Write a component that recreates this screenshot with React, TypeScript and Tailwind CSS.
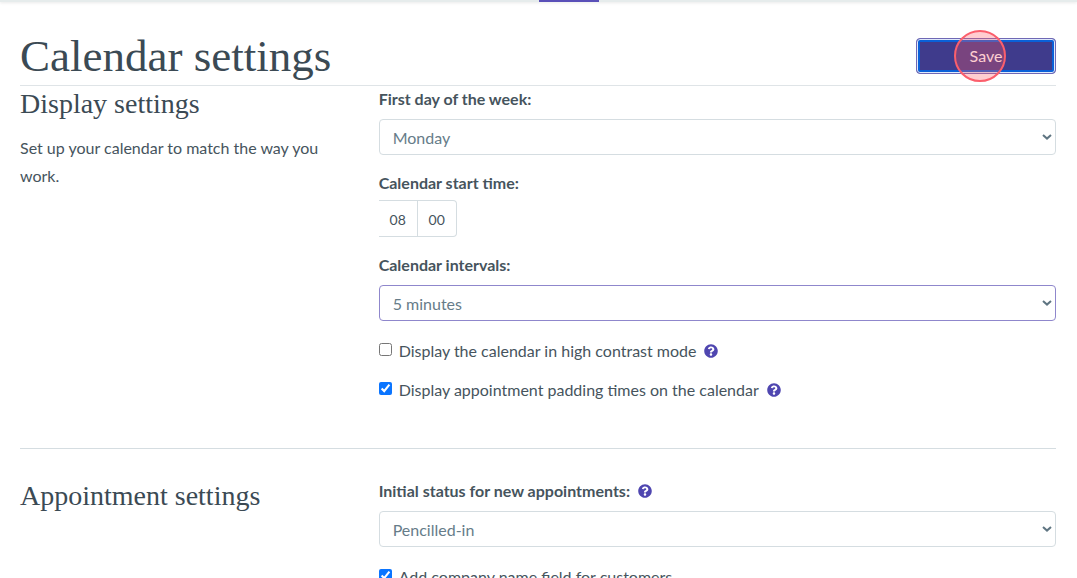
import { useState } from "react";
import type { ReactNode } from "react";
import { FaQuestionCircle } from "react-icons/fa";

function Help({ label }: { label: string }) {
  return (
    <button type="button" aria-label={label} className="ml-2 inline-flex text-[#4f46b0]">
      <FaQuestionCircle size={14} />
    </button>
  );
}

function Chevron() {
  return (
    <svg viewBox="0 0 10 6" className="pointer-events-none absolute right-1 top-[15px] h-[6px] w-[10px]"
      fill="none" stroke="#5f7582" strokeWidth="2">
      <path d="M1 1l4 3.6L9 1" />
    </svg>
  );
}

type SelectFieldProps = {
  id: string;
  label: string;
  options: string[];
  help?: string;
  focused?: boolean;
};

function SelectField({ id, label, options, help, focused }: SelectFieldProps) {
  return (
    <div>
      <div className="flex h-[26px] items-center">
        <label htmlFor={id} className="font-bold">{label}</label>
        {help && <Help label={help} />}
      </div>
      <div className="relative mt-[7px]">
        <select id={id}
          className={`block h-9 w-full appearance-none rounded border bg-white px-[13px] pt-[2px] text-[#667c89] outline-none ${focused ? "border-[#8f87cc]" : "border-[#d5dde1]"}`}>
          {options.map((o) => <option key={o}>{o}</option>)}
        </select>
        <Chevron />
      </div>
    </div>
  );
}

function CheckField({ id, label, help, checked }: { id: string; label: string; help?: string; checked?: boolean }) {
  return (
    <div className="flex h-7 items-center">
      <input id={id} type="checkbox" defaultChecked={checked} className="mb-1 mr-[7px] size-[13px] accent-[#0b75ff]" />
      <label htmlFor={id}>{label}</label>
      {help && <Help label={help} />}
    </div>
  );
}

function Section({ title, desc, children }: { title: string; desc?: string; children: ReactNode }) {
  return (
    <section className="grid grid-cols-3 gap-10">
      <div>
        <h2 className="font-['Liberation_Serif',serif] text-[28px] leading-9 text-[#3b4a54]">{title}</h2>
        {desc && <p className="mt-3 leading-7">{desc}</p>}
      </div>
      <div className="col-span-2">{children}</div>
    </section>
  );
}

export default function App() {
  const [hour, setHour] = useState("08");
  const [minute, setMinute] = useState("00");

  return (
    <div className="flex h-screen flex-col bg-white font-['Lato',sans-serif] text-base text-[#46545d]">
      {/* Bottom edge of the nav, with the active tab marker */}
      <nav className="h-[2px] shrink-0 bg-[#e6ecec] shadow-sm">
        <div className="ml-[50%] h-[2px] w-15 bg-[#5a50b8]" />
      </nav>

      <main className="flex-1 overflow-y-auto pl-5 pr-[21px] [scrollbar-width:none]">
        <header className="flex h-[84px] items-center justify-between border-b border-[#dfe4e7] pt-6">
          <h1 className="font-['Liberation_Serif',serif] text-[45px] leading-[52px] text-[#3b4a54]">Calendar settings</h1>
          <div className="relative">
            <button type="button"
              className="h-9 w-[140px] rounded border border-[#6f68b5] bg-[#3f3b8c] text-white shadow-[inset_0_0_0_1px_#dfe9fb,inset_0_0_0_3px_#0a60d8]">
              Save
            </button>
            {/* Click marker */}
            <span className="pointer-events-none absolute left-[38px] -top-2 size-[52px] rounded-full border-2 border-[#fb5f6c] bg-[#ff5a64]/30" />
          </div>
        </header>

        <Section title="Display settings" desc="Set up your calendar to match the way you work.">
          <SelectField id="first-day" label="First day of the week:" options={["Monday", "Sunday"]} />

          <fieldset className="mt-[15px]">
            <legend className="h-7 font-bold leading-[26px]">Calendar start time:</legend>
            <div className="mt-[2px] flex text-sm">
              <input aria-label="Hour" value={hour} onChange={(e) => setHour(e.target.value)}
                className="h-[37px] w-[39px] border-y border-r border-[#d5dde1] pt-[2px] text-center outline-none" />
              <input aria-label="Minute" value={minute} onChange={(e) => setMinute(e.target.value)}
                className="h-[37px] w-[39px] rounded-r border-y border-r border-[#d5dde1] pt-[2px] text-center outline-none" />
            </div>
          </fieldset>

          <div className="mt-[15px]">
            <SelectField id="intervals" label="Calendar intervals:" options={["5 minutes", "10 minutes", "15 minutes"]} focused />
          </div>

          <div className="mt-4 space-y-[11px]">
            <CheckField id="contrast" label="Display the calendar in high contrast mode" help="About high contrast mode" />
            <CheckField id="padding" label="Display appointment padding times on the calendar" help="About padding times" checked />
          </div>
        </Section>

        <hr className="mb-[29px] mt-11 border-[#d5dde1]" />

        <Section title="Appointment settings">
          <SelectField id="status" label="Initial status for new appointments:" options={["Pencilled-in", "Confirmed"]} help="About initial status" />
          <div className="mt-4">
            <CheckField id="company" label="Add company name field for customers" checked />
          </div>
        </Section>
      </main>
    </div>
  );
}
